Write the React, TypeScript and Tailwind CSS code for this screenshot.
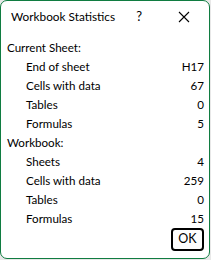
import React from 'react';

const currentSheet = [
  { label: 'End of sheet', value: 'H17' },
  { label: 'Cells with data', value: '67' },
  { label: 'Tables', value: '0' },
  { label: 'Formulas', value: '5' },
];

const workbook = [
  { label: 'Sheets', value: '4' },
  { label: 'Cells with data', value: '259' },
  { label: 'Tables', value: '0' },
  { label: 'Formulas', value: '15' },
];

function StatRow({ label, value }: { label: string; value: string }) {
  return (
    <div className="flex h-[19px] items-center justify-between pl-[19px]">
      <span>{label}</span>
      <span>{value}</span>
    </div>
  );
}

export default function App() {
  return (
    <div className="w-[211px] h-[260px] bg-[#e8e8e8]">
      <div
        className="flex h-[259px] w-[210px] flex-col rounded-[7px] border border-[#107c41] bg-white text-[11.6px] text-black"
        style={{ fontFamily: 'Lato, "Segoe UI", sans-serif' }}
      >
        {/* title bar */}
        <div className="flex h-[31px] items-center pl-[10px] pr-[16px]">
          <span className="flex-1 text-[11.8px]">Workbook Statistics</span>
          <span className="mr-[36px] text-[13px]">?</span>
          <svg width="12" height="12" viewBox="0 0 12 12" className="mr-[3px]">
            <path d="M1 1 L11 11 M11 1 L1 11" stroke="#000" strokeWidth="1.1" />
          </svg>
        </div>

        <div className="flex flex-col pl-[6px] pr-[5px] pt-[6px]">
          <div className="flex h-[19px] items-center">Current Sheet:</div>
          {currentSheet.map((r) => (
            <StatRow key={'c' + r.label} label={r.label} value={r.value} />
          ))}
          <div className="flex h-[19px] items-center">Workbook:</div>
          {workbook.map((r) => (
            <StatRow key={'w' + r.label} label={r.label} value={r.value} />
          ))}
        </div>

        <div className="mt-auto flex justify-end pb-[7px] pr-[5px]">
          <button className="flex h-[23px] w-[33px] items-center justify-center rounded-[4px] border-2 border-black bg-[#fdfdfd] text-[12.5px]">
            OK
          </button>
        </div>
      </div>
    </div>
  );
}
